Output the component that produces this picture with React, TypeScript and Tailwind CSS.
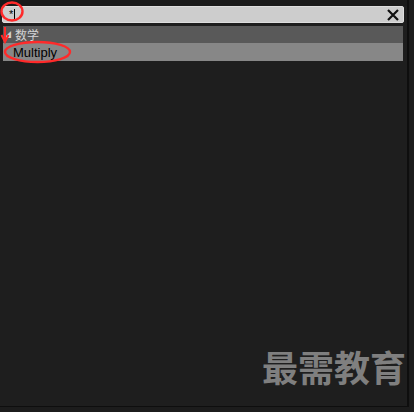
import React from "react";

export default function App() {
  return (
    <div className="relative w-[414px] h-[412px] overflow-hidden bg-[#1c1c1c]" style={{ fontFamily: '"Liberation Sans", "Noto Sans CJK SC", sans-serif' }}>
      <div className="flex h-[406px]">
        <div className="w-[407px] h-full bg-[#1e1e1e] flex flex-col">
          <div className="h-[6px] bg-[#1a1a1a]" />
          <div className="mx-[2px] w-[402px] h-[17px] bg-[#cdcdcd] border border-[#dedede] rounded-[2px] flex items-center pl-[6px] pr-[3px]">
            <span className="text-[11px] leading-none text-black">*</span>
            <span className="w-px h-[11px] bg-black ml-px" />
            <div className="flex-1" />
            <svg width="14" height="14" viewBox="0 0 14 14">
              <path d="M2 2 L12 12 M12 2 L2 12" stroke="#111" strokeWidth="2.2" />
            </svg>
          </div>
          <div className="h-[3px]" />
          <div className="ml-[3px] w-[400px] h-[17px] bg-[#595959] flex items-center pl-[1px]">
            <span className="text-[7px] text-[#cfcfcf] leading-none mr-[2px]">◢</span>
            <span className="text-[12px] text-[#d4d4d4] leading-none ml-[2px]" style={{ fontFamily: '"Noto Sans CJK SC", sans-serif' }}>数学</span>
          </div>
          <div className="ml-[3px] w-[400px] h-[18px] bg-[#878787] flex items-center pl-[10px]">
            <span className="text-[13px] text-black leading-none">Multiply</span>
          </div>
        </div>
        <div className="w-[2px] h-full bg-[#0e0e0e]" />
      </div>
      <div className="h-px bg-[#0e0e0e] w-[409px]" />

      {/* red annotations */}
      <svg className="absolute left-0 top-0 pointer-events-none" width="414" height="80">
        <ellipse cx="12" cy="11.5" rx="10.5" ry="9" fill="none" stroke="#ff2a2a" strokeWidth="2.4" />
        <ellipse cx="37.5" cy="52" rx="32.5" ry="10" fill="none" stroke="#ff2a2a" strokeWidth="2.4" />
        <path d="M5 27 L5 40" stroke="#ff2a2a" strokeWidth="2" />
        <path d="M1.5 35 L5 42 L8.5 35" stroke="#ff2a2a" strokeWidth="2" fill="none" />
      </svg>

      {/* watermark */}
      <div className="absolute left-[262px] top-[348px] text-[36px] font-bold text-[#7f7f7f] leading-none" style={{ fontFamily: '"Noto Sans CJK SC", sans-serif' }}>
        最需教育
      </div>
    </div>
  );
}
